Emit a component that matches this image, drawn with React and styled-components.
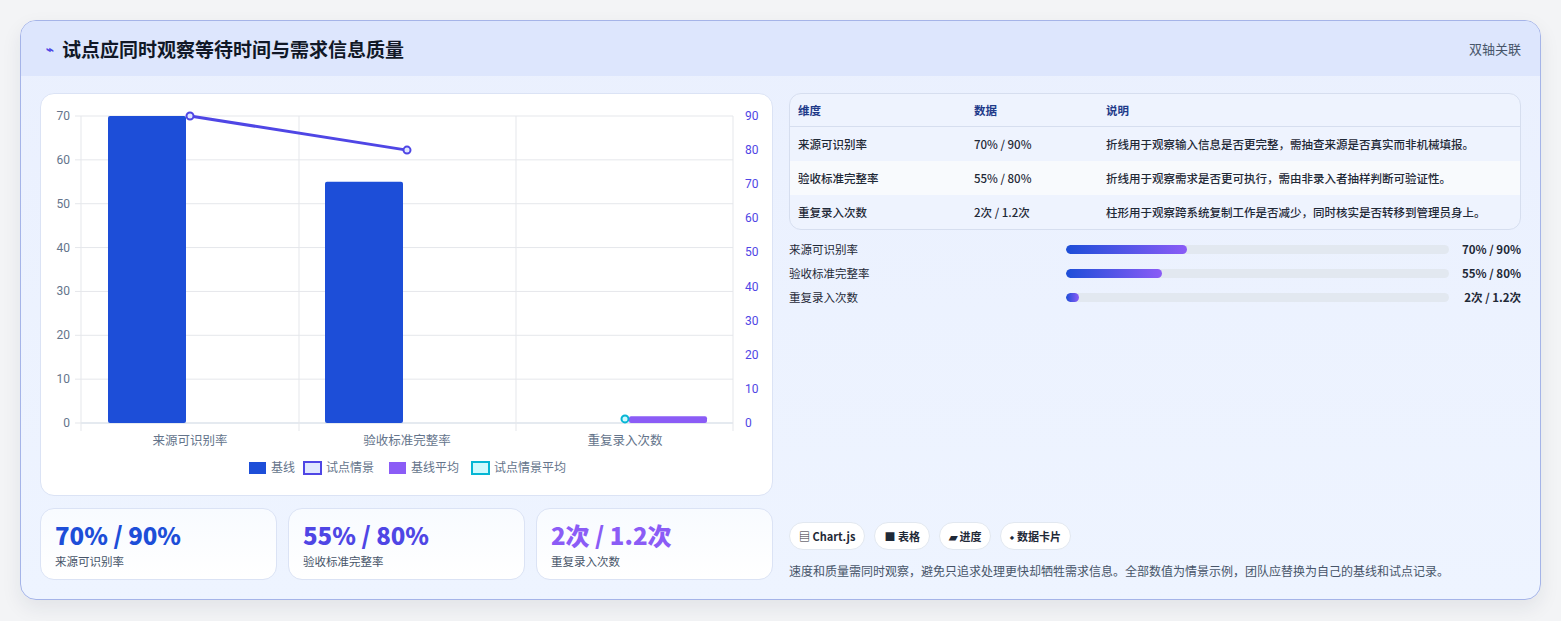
import React from 'react';
import styled, { createGlobalStyle } from 'styled-components';

const GlobalStyle = createGlobalStyle`
  body {
    margin: 0;
    background: #f3f4f6;
    font-family: "Noto Sans CJK SC", "Noto Sans", sans-serif;
  }
`;

const rows = [
  { dim: '来源可识别率', data: '70% / 90%', note: '折线用于观察输入信息是否更完整，需抽查来源是否真实而非机械填报。', fill: 31.6 },
  { dim: '验收标准完整率', data: '55% / 80%', note: '折线用于观察需求是否更可执行，需由非录入者抽样判断可验证性。', fill: 25 },
  { dim: '重复录入次数', data: '2次 / 1.2次', note: '柱形用于观察跨系统复制工作是否减少，同时核实是否转移到管理员身上。', fill: 3.3 },
];

const stats = [
  { value: '70% / 90%', label: '来源可识别率', color: '#1d4ed8' },
  { value: '55% / 80%', label: '验收标准完整率', color: '#4f46e5' },
  { value: '2次 / 1.2次', label: '重复录入次数', color: '#8b5cf6' },
];

const chips = ['▤ Chart.js', '■ 表格', '▰ 进度', '⬩ 数据卡片'];

function Chart() {
  const y0 = 422, top = 115;
  const ly = (v) => y0 - (v / 70) * (y0 - top);
  const ry = (v) => y0 - (v / 90) * (y0 - top);
  const axis = { fontFamily: 'Roboto, sans-serif', fontSize: 12 };
  return (
    <svg width="733" height="403" viewBox="40 93 733 403">
      {[0, 10, 20, 30, 40, 50, 60, 70].map((v) => (
        <g key={v}>
          <line x1="80" x2="732" y1={ly(v)} y2={ly(v)} stroke={v === 0 ? '#cbd5e1' : '#e5e7eb'} />
          <line x1="74" x2="80" y1={ly(v)} y2={ly(v)} stroke="#e5e7eb" />
          <text x="69" y={ly(v) + 4} textAnchor="end" fill="#64748b" {...axis}>{v}</text>
        </g>
      ))}
      {[0, 10, 20, 30, 40, 50, 60, 70, 80, 90].map((v) => (
        <text key={v} x="744" y={ry(v) + 4} fill="#4f46e5" {...axis}>{v}</text>
      ))}
      {[80, 298, 515, 732].map((x) => (
        <line key={x} x1={x} x2={x} y1={top} y2="430" stroke="#e5e7eb" />
      ))}
      <rect x="107" y={ly(70)} width="78" height={y0 - ly(70)} fill="#1d4ed8" rx="2" />
      <rect x="324" y={ly(55)} width="78" height={y0 - ly(55)} fill="#1d4ed8" rx="2" />
      <rect x="628" y={ry(2)} width="78" height={y0 - ry(2)} fill="#8b5cf6" rx="2" />
      <polyline points={`189,${ry(90)} 406,${ry(80)}`} fill="none" stroke="#4f46e5" strokeWidth="3" />
      <circle cx="189" cy={ry(90)} r="3.5" fill="#e0e7ff" stroke="#4f46e5" strokeWidth="2" />
      <circle cx="406" cy={ry(80)} r="3.5" fill="#e0e7ff" stroke="#4f46e5" strokeWidth="2" />
      <circle cx="624" cy={ry(1.2)} r="3.5" fill="#cffafe" stroke="#06b6d4" strokeWidth="2" />
      {[['来源可识别率', 189], ['验收标准完整率', 406], ['重复录入次数', 624]].map(([t, x]) => (
        <text key={t} x={x} y="444" textAnchor="middle" fill="#64748b" fontSize="12.5">{t}</text>
      ))}
      <g fontSize="12" fill="#64748b">
        <rect x="248" y="461" width="17" height="12" fill="#1d4ed8" />
        <text x="270" y="471">基线</text>
        <rect x="303" y="461" width="17" height="12" fill="#e0e7ff" stroke="#4f46e5" strokeWidth="2" />
        <text x="325" y="471">试点情景</text>
        <rect x="388" y="461" width="17" height="12" fill="#8b5cf6" />
        <text x="410" y="471">基线平均</text>
        <rect x="471" y="461" width="17" height="12" fill="#cffafe" stroke="#06b6d4" strokeWidth="2" />
        <text x="493" y="471">试点情景平均</text>
      </g>
    </svg>
  );
}

export default function App() {
  return (
    <>
      <GlobalStyle />
      <Page>
        <Card>
          <Header>
            <Title><Bolt>⌁</Bolt>试点应同时观察等待时间与需求信息质量</Title>
            <Tag>双轴关联</Tag>
          </Header>
          <Body>
            <Left>
              <ChartCard><Chart /></ChartCard>
              <StatRow>
                {stats.map((s) => (
                  <Stat key={s.label}>
                    <StatValue $color={s.color}>{s.value}</StatValue>
                    <StatLabel>{s.label}</StatLabel>
                  </Stat>
                ))}
              </StatRow>
            </Left>
            <Right>
              <Table>
                <thead>
                  <tr><Th>维度</Th><Th>数据</Th><Th>说明</Th></tr>
                </thead>
                <tbody>
                  {rows.map((r, i) => (
                    <Tr key={r.dim} $alt={i === 1}>
                      <Td>{r.dim}</Td><Td>{r.data}</Td><Td>{r.note}</Td>
                    </Tr>
                  ))}
                </tbody>
              </Table>
              <Progress>
                {rows.map((r) => (
                  <ProgressRow key={r.dim}>
                    <PLabel>{r.dim}</PLabel>
                    <Track><Fill style={{ width: `${r.fill}%` }} /></Track>
                    <PValue>{r.data}</PValue>
                  </ProgressRow>
                ))}
              </Progress>
              <Spacer />
              <Chips>
                {chips.map((c) => <Chip key={c}>{c}</Chip>)}
              </Chips>
              <Note>速度和质量需同时观察，避免只追求处理更快却牺牲需求信息。全部数值为情景示例，团队应替换为自己的基线和试点记录。</Note>
            </Right>
          </Body>
        </Card>
      </Page>
    </>
  );
}

const Page = styled.div`
  padding: 20px;
  height: 621px;
  box-sizing: border-box;
`;

const Card = styled.div`
  height: 580px;
  box-sizing: border-box;
  border: 1px solid #a5b4e8;
  border-radius: 16px;
  overflow: hidden;
  background: linear-gradient(180deg, #eaf0fe 0%, #eef4ff 100%);
  box-shadow: 0 8px 20px rgba(30, 41, 59, 0.08);
  display: flex;
  flex-direction: column;
`;

const Header = styled.div`
  height: 55px;
  background: #dde6fd;
  display: flex;
  align-items: center;
  justify-content: space-between;
  padding: 0 19px 0 25px;
`;

const Title = styled.h2`
  margin: 0;
  font-size: 19px;
  font-weight: 700;
  color: #111827;
  display: flex;
  align-items: center;
  gap: 8px;
`;

const Bolt = styled.span`
  color: #4f46e5;
  font-size: 13px;
`;

const Tag = styled.span`
  font-size: 13px;
  color: #475569;
`;

const Body = styled.div`
  flex: 1;
  display: flex;
  gap: 16px;
  padding: 17px 19px 19px 19px;
`;

const Left = styled.div`
  width: 733px;
  display: flex;
  flex-direction: column;
  gap: 12px;
`;

const ChartCard = styled.div`
  height: 403px;
  box-sizing: border-box;
  background: #fff;
  border: 1px solid #dbe3f5;
  border-radius: 14px;
  overflow: hidden;
  svg { display: block; }
`;

const StatRow = styled.div`
  display: grid;
  grid-template-columns: repeat(3, 1fr);
  gap: 11px;
`;

const Stat = styled.div`
  height: 72px;
  box-sizing: border-box;
  background: linear-gradient(180deg, #f8fbff, #ffffff);
  border: 1px solid #dbe3f5;
  border-radius: 14px;
  padding: 12px 14px;
`;

const StatValue = styled.div`
  font-size: 24px;
  font-weight: 800;
  line-height: 28px;
  color: ${(p) => p.$color};
`;

const StatLabel = styled.div`
  font-size: 11.5px;
  color: #475569;
  margin-top: 4px;
`;

const Right = styled.div`
  flex: 1;
  display: flex;
  flex-direction: column;
`;

const Table = styled.table`
  width: 100%;
  border-collapse: separate;
  border-spacing: 0;
  border: 1px solid #d6deef;
  border-radius: 12px;
  overflow: hidden;
  font-size: 11.5px;
  background: #eef3fe;
`;

const Th = styled.th`
  text-align: left;
  font-weight: 600;
  color: #1e3a8a;
  height: 32px;
  padding: 0 8px;
  border-bottom: 1px solid #d6deef;
  &:nth-child(1) { width: 160px; }
  &:nth-child(2) { width: 116px; }
`;

const Tr = styled.tr`
  background: ${(p) => (p.$alt ? '#f8fafd' : 'transparent')};
  & + & td { border-top: 1px solid #e2e8f0; }
`;

const Td = styled.td`
  height: 34px;
  padding: 0 8px;
  color: #1f2937;
  font-weight: 500;
`;

const Progress = styled.div`
  display: flex;
  flex-direction: column;
  gap: 8px;
  margin-top: 11px;
`;

const ProgressRow = styled.div`
  display: flex;
  align-items: center;
  height: 16px;
`;

const PLabel = styled.div`
  width: 277px;
  font-size: 11.5px;
  color: #1f2937;
`;

const Track = styled.div`
  flex: 1;
  height: 9px;
  border-radius: 5px;
  background: #e2e8f0;
  overflow: hidden;
`;

const Fill = styled.div`
  height: 100%;
  border-radius: 5px;
  background: linear-gradient(90deg, #1d4ed8, #8b5cf6);
`;

const PValue = styled.div`
  width: 72px;
  text-align: right;
  font-size: 11.5px;
  font-weight: 700;
  color: #1f2937;
`;

const Spacer = styled.div`flex: 1;`;

const Chips = styled.div`
  display: flex;
  gap: 9px;
`;

const Chip = styled.span`
  height: 28px;
  box-sizing: border-box;
  display: inline-flex;
  align-items: center;
  padding: 0 9px;
  border-radius: 14px;
  background: #fff;
  border: 1px solid #e2e8f0;
  font-size: 11px;
  font-weight: 600;
  color: #1f2937;
`;

const Note = styled.p`
  margin: 12px 0 1px;
  font-size: 12px;
  color: #475569;
`;
